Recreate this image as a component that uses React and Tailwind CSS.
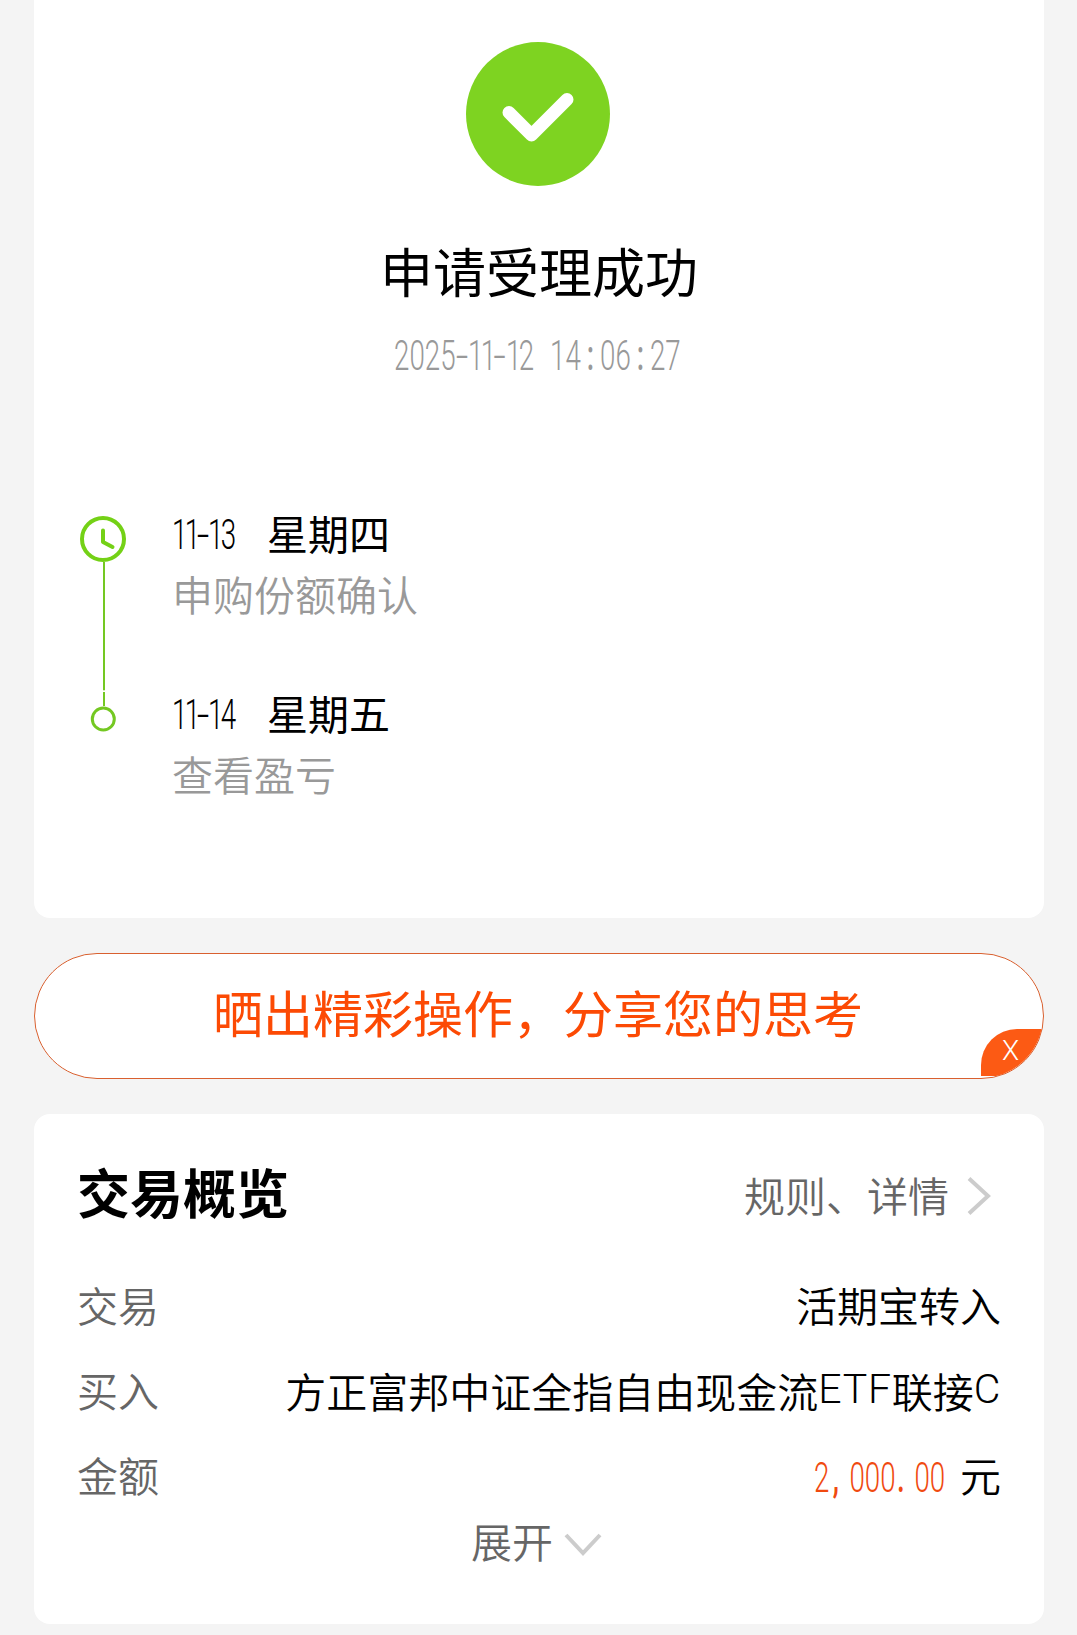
import clsx from 'clsx';

const steps = [
  { month: '11', date: '13', day: '星期四', note: '申购份额确认', current: true },
  { month: '11', date: '14', day: '星期五', note: '查看盈亏', current: false },
];

// Narrow numerals: the parent fixes the visible width, the text is squeezed into it
function Digits({ children, className }) {
  return (
    <span
      className={clsx(
        "inline-block origin-left scale-x-[0.66] whitespace-nowrap font-['Roboto'] text-[42px] font-light leading-10",
        className
      )}
    >
      {children}
    </span>
  );
}

const Dash = ({ wide }) => (
  <span className={wide ? 'px-[3.5px]' : 'px-[2px]'}>
    <span className="inline-block scale-x-[1.6]">-</span>
  </span>
);

const One = () => <span className="tracking-[-4px]">1</span>;

const Latin = ({ children }) => (
  <span className="align-[5px] font-['Roboto'] font-light leading-none tracking-[0.7px]">{children}</span>
);

function StepIcon({ current }) {
  if (current) {
    return (
      <svg width="46" height="46" viewBox="0 0 46 46" fill="none" stroke="#74d116" className="block">
        <circle cx="23" cy="23" r="21" strokeWidth="4" />
        <path d="M23 14.5V26L32.5 31" strokeWidth="4" strokeLinecap="round" strokeLinejoin="round" />
      </svg>
    );
  }
  return (
    <svg width="46" height="26" viewBox="0 0 46 26" fill="none" stroke="#74c822" className="block">
      <circle cx="23.3" cy="13" r="11" strokeWidth="3" />
    </svg>
  );
}

export default function App() {
  return (
    <div className="flex h-[1635px] w-[1077px] flex-col overflow-hidden bg-[#f4f4f4] pl-[34px] pr-[33px] font-['Noto_Sans_CJK_SC',sans-serif] text-[41px] font-[350] leading-10 text-black">
      <section className="flex h-[918px] shrink-0 flex-col rounded-b-2xl bg-white pt-[42px]">
        <svg width="144" height="144" viewBox="0 0 144 144" className="ml-[432px] block">
          <circle cx="72" cy="72" r="72" fill="#7ed321" />
          <path
            d="M43 70.5L65.5 93L101 57.5"
            fill="none"
            stroke="#fff"
            strokeWidth="13"
            strokeLinecap="round"
            strokeLinejoin="round"
          />
        </svg>
        <h1 className="mt-[54px] text-center text-[53px] font-normal leading-[60px]">申请受理成功</h1>
        <div className="ml-[360px] mt-[36px] flex h-10 w-[290px] text-[#999]">
          <Digits>
            2025<Dash wide /><One /><One /><Dash wide /><One />2
            <span className="pl-6">14</span>
            <span className="px-[9px] font-medium">:</span>06<span className="px-[9px] font-medium">:</span>27
          </Digits>
        </div>

        <ul className="mt-[136px] pl-[46px]">
          {steps.map((s) => (
            <li key={s.date} className="flex h-[180px]">
              <div className="flex w-[46px] flex-col items-center">
                {s.current ? (
                  <>
                    <div className="pt-1">
                      <StepIcon current />
                    </div>
                    <div className="ml-[2px] w-[2px] grow bg-[#74c822]" />
                    <div className="mb-px ml-[2px] h-px w-[2px] bg-[#d8f0bc]" />
                  </>
                ) : (
                  <>
                    <div className="ml-[2px] h-[14px] w-[2px] bg-[#74c822]" />
                    <StepIcon />
                  </>
                )}
              </div>
              <div className="ml-[46px]">
                <div className="flex h-10">
                  <div className="-mt-px w-[95px]">
                    <Digits>
                      {[...s.month].map((c, i) => (
                        <One key={i} />
                      ))}
                      <Dash />
                      <One />
                      {s.date.slice(1)}
                    </Digits>
                  </div>
                  <span className="font-normal">{s.day}</span>
                </div>
                <div className="mt-[21px] text-[#999]">{s.note}</div>
              </div>
            </li>
          ))}
        </ul>
      </section>

      <div className="relative mt-[35px] h-[126px] shrink-0 overflow-hidden rounded-full border border-[#d9602f] bg-white">
        <p className="pl-[178px] pt-[27px] text-[50px] font-normal leading-[60px] text-[#fc4a04]">
          晒出精彩操作，分享您的思考
        </p>
        <button className="absolute bottom-[2px] right-0 flex h-[47px] w-[62px] items-start justify-center rounded-tl-[36px] bg-[#fc5a14] pr-[3px] pt-[7px] font-['Roboto'] text-[28px] font-light leading-[30px] text-white">
          X
        </button>
      </div>

      <section className="mt-[35px] flex h-[510px] shrink-0 flex-col rounded-2xl bg-white px-[43px] pt-[47px]">
        <div className="flex h-[60px] items-center justify-between">
          <h2 className="text-[53px] font-bold leading-[60px]">交易概览</h2>
          <div className="flex items-center pt-[6px] text-[#666]">
            <span>规则、详情</span>
            <svg width="26" height="40" viewBox="0 0 26 40" fill="none" stroke="#ccc" strokeWidth="4" className="ml-[17px] mr-[9px] mt-1">
              <path d="M3 2.5L22 20L3 37.5" />
            </svg>
          </div>
        </div>

        <dl className="mt-[63px] flex flex-col gap-[45px]">
          <div className="flex h-10 justify-between">
            <dt className="text-[#666]">交易</dt>
            <dd>活期宝转入</dd>
          </div>
          <div className="flex h-10 justify-between">
            <dt className="text-[#666]">买入</dt>
            <dd>
              方正富邦中证全指自由现金流<Latin>ETF</Latin>联接<Latin>C</Latin>
            </dd>
          </div>
          <div className="flex h-10 justify-between">
            <dt className="text-[#666]">金额</dt>
            <dd className="flex">
              <span className="w-[146px]">
                <Digits className="text-[#f04a10]">
                  2<span className="pl-[5px] pr-4 font-medium">,</span>000<span className="pl-[2px] pr-[15px] font-medium">.</span>00
                </Digits>
              </span>
              元
            </dd>
          </div>
        </dl>

        <button className="ml-[394px] mt-[26px] flex items-center text-[#666]">
          展开
          <svg width="38" height="24" viewBox="0 0 38 24" fill="none" stroke="#ccc" strokeWidth="4" className="ml-[11px] mt-[10px]">
            <path d="M2 2L19 20L36 2" />
          </svg>
        </button>
      </section>
    </div>
  );
}
